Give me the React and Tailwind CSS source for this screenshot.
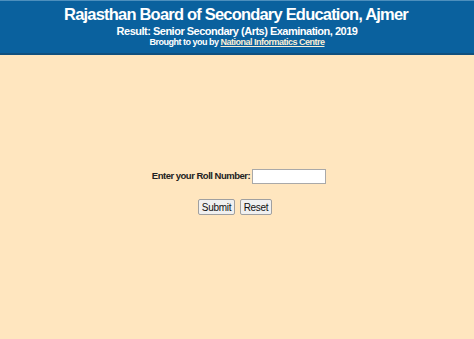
import React, { useState } from 'react';

export default function App() {
  const [roll, setRoll] = useState('');

  return (
    <div className="min-h-screen bg-[#ffe6bf] font-['Liberation_Sans',Arial,sans-serif] flex flex-col">
      {/* Header */}
      <div className="bg-[#0a619e] border-t border-t-[#4d8fbd] border-b-2 border-b-[#10507e] h-[55px] flex flex-col items-center text-white font-bold leading-none">
        <div className="text-[16.5px] tracking-[-0.8px] mt-[5px] ml-[-2px]">Rajasthan Board of Secondary Education, Ajmer</div>
        <div className="text-[11px] tracking-[-0.5px] mt-[3px]">Result: Senior Secondary (Arts) Examination, 2019</div>
        <div className="text-[9px] tracking-[-0.5px] mt-[1px]">
          Brought to you by{' '}
          <a href="#" className="underline text-[#fbefd6]">National Informatics Centre</a>
        </div>
      </div>

      {/* Form */}
      <div className="flex flex-col items-center pt-[114px]">
        <div className="flex items-center gap-[2px] ml-[4px] text-[9.5px] tracking-[-0.5px] font-bold text-[#222]">
          <label>Enter your Roll Number:</label>
          <input
            type="text"
            value={roll}
            onChange={(e) => setRoll(e.target.value)}
            className="w-[74px] h-[15px] bg-white border border-[#a9a9a9] outline-none px-1"
          />
        </div>
        <div className="flex gap-[5px] mt-[15px] ml-[-4px]">
          <button className="w-[37px] h-[16px] text-[10px] tracking-[-0.3px] text-[#111] bg-[#f0f0f0] border border-[#a0a0a0] rounded-[2px]">Submit</button>
          <button className="w-[32px] h-[16px] text-[10px] tracking-[-0.3px] text-[#111] bg-[#f0f0f0] border border-[#a0a0a0] rounded-[2px]">Reset</button>
        </div>
      </div>
    </div>
  );
}
